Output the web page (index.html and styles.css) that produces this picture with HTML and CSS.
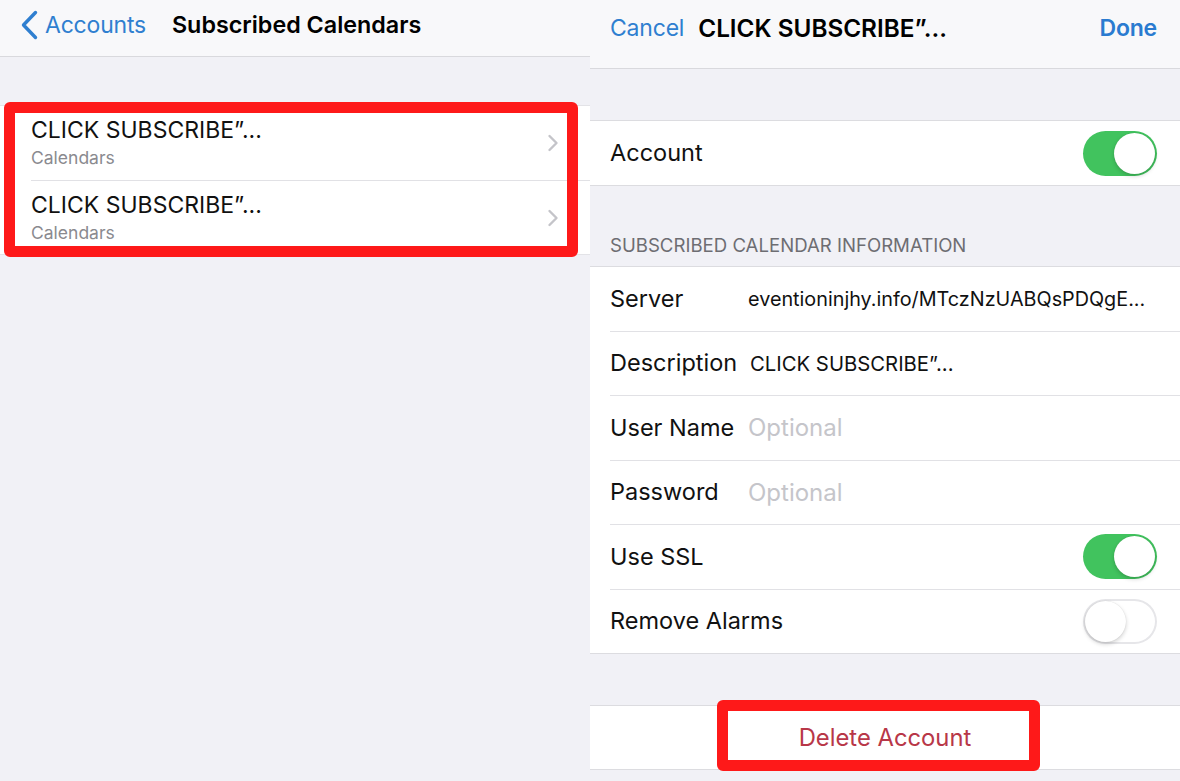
FILE: index.html
```html
<!DOCTYPE html>
<html lang="en">
<head>
<meta charset="utf-8">
<title>Subscribed Calendars</title>
<link rel="stylesheet" href="styles.css">
</head>
<body>
<div class="screen">
  <section class="pane pane-left">
    <header class="nav nav-left">
      <a class="back">
        <svg class="back-chevron" width="18" height="30" viewBox="0 0 18 30"><path d="M15.5 2.5 L3.5 15 L15.5 27.5" fill="none" stroke="#2f7fd0" stroke-width="3.4" stroke-linecap="round" stroke-linejoin="round"/></svg>
        <span class="back-label">Accounts</span>
      </a>
      <h1 class="nav-title">Subscribed Calendars</h1>
    </header>

    <div class="list-group">
      <div class="list-row">
        <div class="list-text">
          <div class="list-title">CLICK SUBSCRIBE”...</div>
          <div class="list-sub">Calendars</div>
        </div>
        <svg class="disclosure" width="12" height="18" viewBox="0 0 12 18"><path d="M2.5 2 L9.5 9 L2.5 16" fill="none" stroke="#c4c4c9" stroke-width="2.4" stroke-linecap="round" stroke-linejoin="round"/></svg>
      </div>
      <div class="list-row list-row-sep">
        <div class="list-text">
          <div class="list-title">CLICK SUBSCRIBE”...</div>
          <div class="list-sub">Calendars</div>
        </div>
        <svg class="disclosure" width="12" height="18" viewBox="0 0 12 18"><path d="M2.5 2 L9.5 9 L2.5 16" fill="none" stroke="#c4c4c9" stroke-width="2.4" stroke-linecap="round" stroke-linejoin="round"/></svg>
      </div>
      <div class="highlight highlight-list"></div>
    </div>
  </section>

  <section class="pane pane-right">
    <header class="nav nav-right">
      <span class="nav-cancel">Cancel</span>
      <span class="nav-title-right">CLICK SUBSCRIBE”...</span>
      <span class="nav-done">Done</span>
    </header>

    <div class="group group-account">
      <div class="cell">
        <span class="cell-label">Account</span>
        <span class="switch switch-on"><span class="knob"></span></span>
      </div>
    </div>

    <div class="section-header">SUBSCRIBED CALENDAR INFORMATION</div>

    <div class="group group-info">
      <div class="cell cell-first">
        <span class="cell-label field-label">Server</span>
        <span class="field-value">eventioninjhy.info/MTczNzUABQsPDQgE...</span>
      </div>
      <div class="cell">
        <span class="cell-label field-label">Description</span>
        <span class="field-value field-value-desc">CLICK SUBSCRIBE”...</span>
      </div>
      <div class="cell">
        <span class="cell-label field-label">User Name</span>
        <span class="field-placeholder">Optional</span>
      </div>
      <div class="cell">
        <span class="cell-label field-label">Password</span>
        <span class="field-placeholder">Optional</span>
      </div>
      <div class="cell">
        <span class="cell-label">Use SSL</span>
        <span class="switch switch-on"><span class="knob"></span></span>
      </div>
      <div class="cell">
        <span class="cell-label">Remove Alarms</span>
        <span class="switch switch-off"><span class="knob"></span></span>
      </div>
    </div>

    <div class="group group-delete">
      <div class="delete-cell">Delete Account</div>
      <div class="highlight highlight-delete"></div>
    </div>
  </section>
</div>
</body>
</html>
```

FILE: styles.css
```css
* { box-sizing: border-box; }

html, body {
  margin: 0;
  padding: 0;
}

body {
  width: 1180px;
  height: 781px;
  overflow: hidden;
  background: #f1f1f6;
  font-family: Inter, "Liberation Sans", Arial, sans-serif;
  color: #111;
}

.screen {
  display: flex;
  width: 1180px;
  height: 781px;
}

.pane {
  background: #f1f1f6;
  display: flex;
  flex-direction: column;
}

.pane-left { width: 590px; }
.pane-right { flex: 1; }

/* ---------- nav bars ---------- */
.nav {
  display: flex;
  align-items: flex-start;
  background: #f8f8fa;
  border-bottom: 1px solid #d9d9dd;
  flex: none;
}

.nav-left {
  height: 57px;
  padding: 10px 0 0 20px;
}

.back {
  display: flex;
  align-items: center;
  color: #2f7fd0;
}

.back-chevron { flex: none; }

.back-label {
  margin-left: 7px;
  font-size: 23px;
  line-height: 30px;
  letter-spacing: -0.2px;
}

.nav-title {
  margin: 0 0 0 26px;
  font-size: 23.3px;
  line-height: 30px;
  font-weight: 600;
  color: #000;
}

.nav-right {
  height: 69px;
  padding: 13px 23px 0 20px;
  font-size: 23px;
  line-height: 30px;
}

.nav-cancel { color: #2f7fd0; letter-spacing: -0.2px; }

.nav-title-right {
  margin-left: 14px;
  font-size: 24.3px;
  font-weight: 600;
  color: #000;
}

.nav-done {
  margin-left: auto;
  font-weight: 600;
  color: #2a7bd0;
  letter-spacing: -0.2px;
}

/* ---------- left list ---------- */
.list-group {
  position: relative;
  margin-top: 48px;
  background: #fff;
  border-top: 1px solid #e3e3e7;
  border-bottom: 1px solid #e3e3e7;
}

.list-row {
  height: 74px;
  display: flex;
  align-items: center;
  padding: 0 31px 0 31px;
}

.list-row-sep {
  border-top: 1px solid #e1e1e5;
  margin-left: 31px;
  padding-left: 0;
  height: 74px;
}

.list-text { flex: 1; }

.list-title {
  font-size: 23px;
  line-height: 26px;
  color: #111;
}

.list-sub {
  margin-top: 4px;
  font-size: 17.5px;
  line-height: 22px;
  color: #8a8a8f;
}

.disclosure { flex: none; }

/* ---------- annotation highlight ---------- */
.highlight {
  position: absolute;
  border: 11px solid #fe1919;
  border-radius: 6px;
  pointer-events: none;
}

.highlight-list {
  top: -4px;
  left: 4px;
  width: 574px;
  height: 155px;
}

/* ---------- right settings ---------- */
.group {
  background: #fff;
  border-top: 1px solid #dcdce0;
  border-bottom: 1px solid #dcdce0;
  flex: none;
}

.group-account {
  margin-top: 51px;
}

.group-account .cell {
  height: 64px;
}

.cell {
  display: flex;
  align-items: center;
  height: 64.5px;
  margin-left: 20px;
  padding-right: 23px;
  border-top: 1px solid #e1e1e5;
}

.group-account .cell,
.cell-first {
  border-top: none;
}

.group-info .cell-first { height: 63.5px; }

.cell-label {
  font-size: 23.5px;
  line-height: 30px;
  color: #111;
}

.field-label {
  width: 138px;
  flex: none;
}

.field-value {
  font-size: 19.8px;
  color: #111;
  white-space: nowrap;
}

.field-value-desc {
  margin-left: 2px;
  font-size: 20.3px;
}

.field-placeholder {
  font-size: 24px;
  color: #c5c5ca;
}

.section-header {
  height: 80px;
  display: flex;
  align-items: flex-end;
  padding: 0 0 10px 20px;
  font-size: 18.6px;
  line-height: 22px;
  color: #6d6d72;
  flex: none;
}

/* switches */
.switch {
  position: relative;
  margin-left: auto;
  width: 74px;
  height: 45px;
  border-radius: 23px;
  flex: none;
}

.switch-on {
  background: #41c35e;
}

.switch-off {
  background: #fff;
  box-shadow: inset 0 0 0 2px #e6e6e9;
}

.knob {
  position: absolute;
  top: 2px;
  width: 41px;
  height: 41px;
  border-radius: 50%;
  background: #fff;
  box-shadow: 0 2px 4px rgba(0, 0, 0, 0.18), 0 0 1px rgba(0,0,0,0.15);
}

.switch-on .knob { right: 2px; }
.switch-off .knob { left: 2px; }

/* delete */
.group-delete {
  position: relative;
  margin-top: 51px;
}

.delete-cell {
  height: 63px;
  display: flex;
  align-items: center;
  justify-content: center;
  font-size: 23.8px;
  color: #b83748;
}

.highlight-delete {
  top: -6px;
  left: 127px;
  width: 323px;
  height: 71px;
}
```
